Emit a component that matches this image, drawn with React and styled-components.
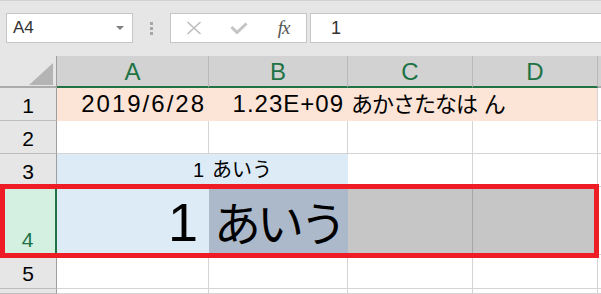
import styled, { createGlobalStyle } from "styled-components";

const GREEN = "#217346";
const PEACH = "#fce4d6";
const BLUE = "#ddebf7";
const GRID = "#d4d4d4";

const GlobalStyle = createGlobalStyle`
  html, body {
    margin: 0;
    padding: 0;
    background: #fff;
  }
  body {
    font-family: "Liberation Sans", "Noto Sans CJK JP", sans-serif;
  }
`;

const Window = styled.div`
  width: 601px;
  height: 294px;
  overflow: hidden;
  display: flex;
  flex-direction: column;
  background: #fff;
`;

const FormulaBar = styled.div`
  box-sizing: border-box;
  height: 56px;
  flex: none;
  display: flex;
  align-items: flex-start;
  padding: 12px 0 0 6px;
  background: #e6e6e6;
  border-top: 1px solid #d2d2d2;
`;

const Field = styled.div`
  box-sizing: border-box;
  height: 30px;
  display: flex;
  align-items: center;
  background: #fff;
  border: 1px solid #c6c6c6;
  color: #333;
`;

const NameBox = styled(Field)`
  width: 127px;
  justify-content: space-between;
  padding: 0 8px 0 6px;
  font-size: 17px;
`;

const Caret = styled.span`
  width: 0;
  height: 0;
  border-left: 4px solid transparent;
  border-right: 4px solid transparent;
  border-top: 4px solid #7f7f7f;
`;

const Grip = styled.div`
  display: flex;
  flex-direction: column;
  gap: 2px;
  margin: 9px 17px 0;
`;

const Dot = styled.span`
  width: 3px;
  height: 3px;
  background: #a6a6a6;
`;

const FxBox = styled(Field)`
  width: 137px;
`;

const FxSlot = styled.span`
  width: 45px;
  height: 100%;
  display: flex;
  align-items: center;
  justify-content: center;
`;

const FxText = styled.span`
  font-family: "Liberation Serif", serif;
  font-style: italic;
  font-size: 19px;
  color: #555;
  letter-spacing: -1px;
`;

const Input = styled(Field)`
  flex: 1;
  margin: 0 -4px 0 3px;
  padding-left: 20px;
  font-size: 18px;
`;

const Sheet = styled.div`
  position: relative;
  flex: 1;
  display: grid;
  grid-template-columns: 57px 152px 139px 125px 125px 1fr;
  grid-template-rows: 32px 33px 33px 33px 68px 34px 1fr;
`;

const Corner = styled.div`
  box-sizing: border-box;
  display: flex;
  align-items: flex-end;
  justify-content: flex-end;
  padding: 0 3px 1px 0;
  background: #e6e6e6;
  border-right: 1px solid #9e9e9e;
  border-bottom: 2px solid #ababab;
`;

const Triangle = styled.span`
  width: 24px;
  height: 22px;
  background: #b4b4b4;
  clip-path: polygon(100% 0, 100% 100%, 0 100%);
`;

const ColHead = styled.div`
  box-sizing: border-box;
  display: flex;
  align-items: center;
  justify-content: center;
  padding-top: 2px;
  background: #d2d2d2;
  border-right: 1px solid #b9b9b9;
  border-bottom: 2px solid ${(p) => (p.$active ? GREEN : "#ababab")};
  color: ${GREEN};
  font-size: 24px;
  line-height: 1;
`;

const RowHead = styled.div`
  box-sizing: border-box;
  display: flex;
  align-items: flex-end;
  justify-content: center;
  padding-bottom: 4px;
  background: ${(p) => (p.$active ? "#d3f0e0" : "#e6e6e6")};
  color: ${(p) => (p.$active ? GREEN : "#000")};
  border-right: ${(p) => (p.$active ? `2px solid ${GREEN}` : "1px solid #9e9e9e")};
  border-bottom: 1px solid #bdbdbd;
  font-size: 21px;
  line-height: 1;
`;

const Cell = styled.div`
  box-sizing: border-box;
  min-width: 0;
  display: flex;
  align-items: flex-end;
  justify-content: ${(p) => (p.$align === "right" ? "flex-end" : "flex-start")};
  padding: 0 ${(p) => p.$pr ?? 3}px ${(p) => p.$pb ?? 4}px ${(p) => p.$pl ?? 3}px;
  background: ${(p) => p.$bg || "#fff"};
  border-right: 1px solid ${(p) => p.$vline || GRID};
  border-bottom: 1px solid ${(p) => p.$hline || GRID};
  font-size: ${(p) => p.$size || 24}px;
  letter-spacing: ${(p) => p.$track || 0}px;
  line-height: 1;
  white-space: nowrap;
  color: #000;
`;

const Value = styled.span`
  position: relative;
  z-index: 1;
`;

const Ja = styled.span`
  font-family: "Noto Sans CJK JP", sans-serif;
  font-size: ${(p) => p.$size}px;
  letter-spacing: ${(p) => p.$track || 0}px;
`;

const Marquee = styled.div`
  position: absolute;
  left: 0;
  top: 128px;
  width: 599px;
  height: 74px;
  box-sizing: border-box;
  border: 5px solid #ee1c25;
  pointer-events: none;
`;

const columns = ["A", "B", "C", "D", ""];

const EmptyRow = ({ n }) => (
  <>
    <RowHead>{n}</RowHead>
    {columns.map((c) => (
      <Cell key={c || "E"} />
    ))}
  </>
);

const App = () => {
  return (
    <Window>
      <GlobalStyle />
      <FormulaBar>
        <NameBox>
          A4
          <Caret />
        </NameBox>
        <Grip>
          <Dot />
          <Dot />
          <Dot />
        </Grip>
        <FxBox>
          <FxSlot>
            <svg width="16" height="14" viewBox="0 0 16 14">
              <path d="M1.5 1 14.5 13M14.5 1 1.5 13" stroke="#bcbcbc" strokeWidth="1.6" fill="none" />
            </svg>
          </FxSlot>
          <FxSlot>
            <svg width="18" height="12" viewBox="0 0 18 12">
              <path d="M1.5 5 7 10.5 16.5 1.5" stroke="#c4c4c4" strokeWidth="3" fill="none" />
            </svg>
          </FxSlot>
          <FxSlot>
            <FxText>fx</FxText>
          </FxSlot>
        </FxBox>
        <Input>1</Input>
      </FormulaBar>

      <Sheet>
        <Corner>
          <Triangle />
        </Corner>
        {columns.map((c) => (
          <ColHead key={c || "E"} $active={c !== ""}>
            {c}
          </ColHead>
        ))}

        <RowHead>1</RowHead>
        <Cell $bg={PEACH} $vline={PEACH} $hline={PEACH} $align="right" $track={2} $pr={2}>
          <Value>2019/6/28</Value>
        </Cell>
        <Cell $bg={PEACH} $vline={PEACH} $hline={PEACH} $align="right" $track={1}>
          <Value>1.23E+09</Value>
        </Cell>
        <Cell $bg={PEACH} $vline={PEACH} $hline={PEACH}>
          <Value>
            <Ja $size={22} $track={-1}>あかさたなは</Ja> <Ja $size={22}>ん</Ja>
          </Value>
        </Cell>
        <Cell $bg={PEACH} $hline={PEACH} />
        <Cell />

        <EmptyRow n={2} />

        <RowHead>3</RowHead>
        <Cell $bg={BLUE} $vline={BLUE} $align="right" $size={20} $pb={6} $pr={4}>
          <Value>1</Value>
        </Cell>
        <Cell $bg={BLUE} $vline={BLUE} $size={20} $pb={6}>
          <Value>
            <Ja $size={20}>あいう</Ja>
          </Value>
        </Cell>
        <Cell />
        <Cell />
        <Cell />

        <RowHead $active>4</RowHead>
        <Cell $bg={BLUE} $vline={BLUE} $align="right" $size={54} $pb={5} $pr={10}>
          <Value>1</Value>
        </Cell>
        <Cell $bg="#acb9ca" $vline="#acb9ca" $size={54} $pb={5} $pl={5}>
          <Value>
            <Ja $size={47} $track={-4}>あいう</Ja>
          </Value>
        </Cell>
        <Cell $bg="#c6c6c6" $vline="#a6a6a6" />
        <Cell $bg="#c6c6c6" />
        <Cell />

        <EmptyRow n={5} />
        <EmptyRow n="" />

        <Marquee />
      </Sheet>
    </Window>
  );
};

export default App;
